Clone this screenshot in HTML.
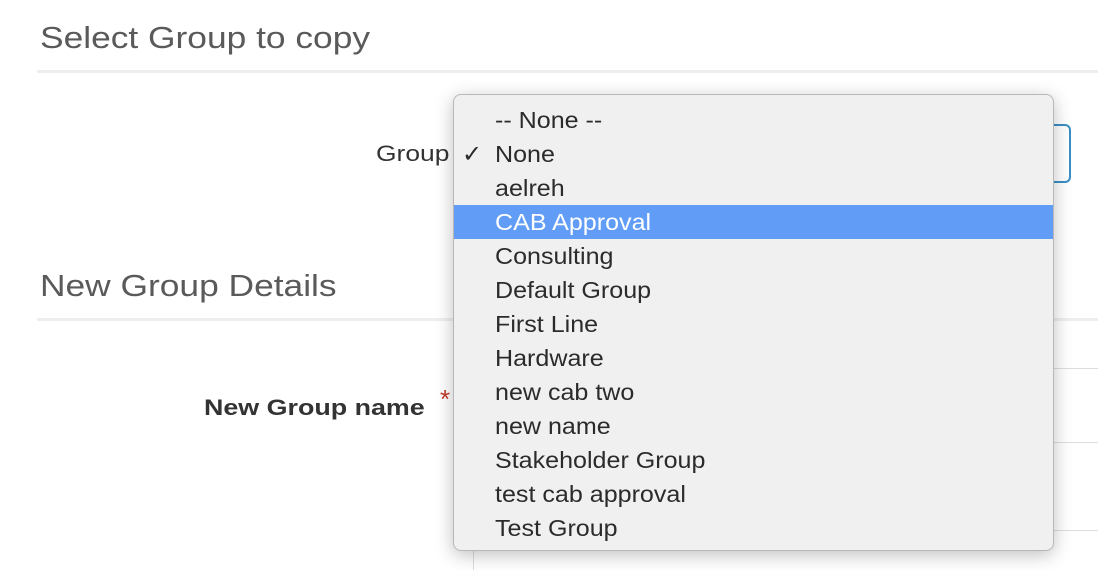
<!DOCTYPE html>
<html><head><style>
body{margin:0;width:1098px;height:570px;background:#fff;position:relative;overflow:hidden;font-family:"Liberation Sans",sans-serif;color:#555}
.a{position:absolute}
.h{font-size:31px;color:#5a5a5a;left:40px;line-height:1;transform:scaleX(1.14);transform-origin:0 0}
.div{left:37px;right:0;height:3px;background:#eeeeee}
.pop{left:453px;top:94px;width:601px;height:457px;background:#f0f0f0;border:1px solid #b8b8b8;border-radius:8px;box-shadow:0 4px 18px rgba(0,0,0,.25);box-sizing:border-box;padding-top:8px}
.r{height:34px;line-height:34px;font-size:23px;color:#2b2b2b;padding-left:41px;position:relative}
.r span.t{display:inline-block;transform:scaleX(1.09);transform-origin:0 50%}
.sel{background:#619cf6;color:#fff}
</style></head><body>
<div class="a h" style="top:22px">Select Group to copy</div>
<div class="a div" style="top:70px"></div>
<div class="a" style="left:376px;top:141px;font-size:22px;color:#333;transform:scaleX(1.2);transform-origin:0 0">Group</div>
<div class="a" style="left:1000px;top:124px;width:71px;height:59px;border:2px solid #3a8fc4;border-radius:6px;box-sizing:border-box"></div>
<div class="a h" style="top:270px">New Group Details</div>
<div class="a div" style="top:318px"></div>
<div class="a" style="left:204px;top:395px;font-size:22px;font-weight:bold;color:#333;transform:scaleX(1.22);transform-origin:0 0">New Group name</div>
<div class="a" style="left:440px;top:384px;font-size:26px;color:#c0392b">*</div>
<div class="a" style="left:473px;right:0;top:368px;height:1px;background:#ddd"></div>
<div class="a" style="left:473px;right:0;top:442px;height:1px;background:#ddd"></div>
<div class="a" style="left:473px;right:0;top:530px;height:1px;background:#ddd"></div>
<div class="a" style="left:473px;top:540px;width:1px;height:30px;background:#ddd"></div>
<div class="a pop">
<div class="r"><span class="t">-- None --</span></div>
<div class="r"><span style="position:absolute;left:8px;font-size:24px;font-weight:bold;font-family:'DejaVu Sans',sans-serif">✓</span><span class="t">None</span></div>
<div class="r"><span class="t">aelreh</span></div>
<div class="r sel"><span class="t">CAB Approval</span></div>
<div class="r"><span class="t">Consulting</span></div>
<div class="r"><span class="t">Default Group</span></div>
<div class="r"><span class="t">First Line</span></div>
<div class="r"><span class="t">Hardware</span></div>
<div class="r"><span class="t">new cab two</span></div>
<div class="r"><span class="t">new name</span></div>
<div class="r"><span class="t">Stakeholder Group</span></div>
<div class="r"><span class="t">test cab approval</span></div>
<div class="r"><span class="t">Test Group</span></div>
</div>
</body></html>
